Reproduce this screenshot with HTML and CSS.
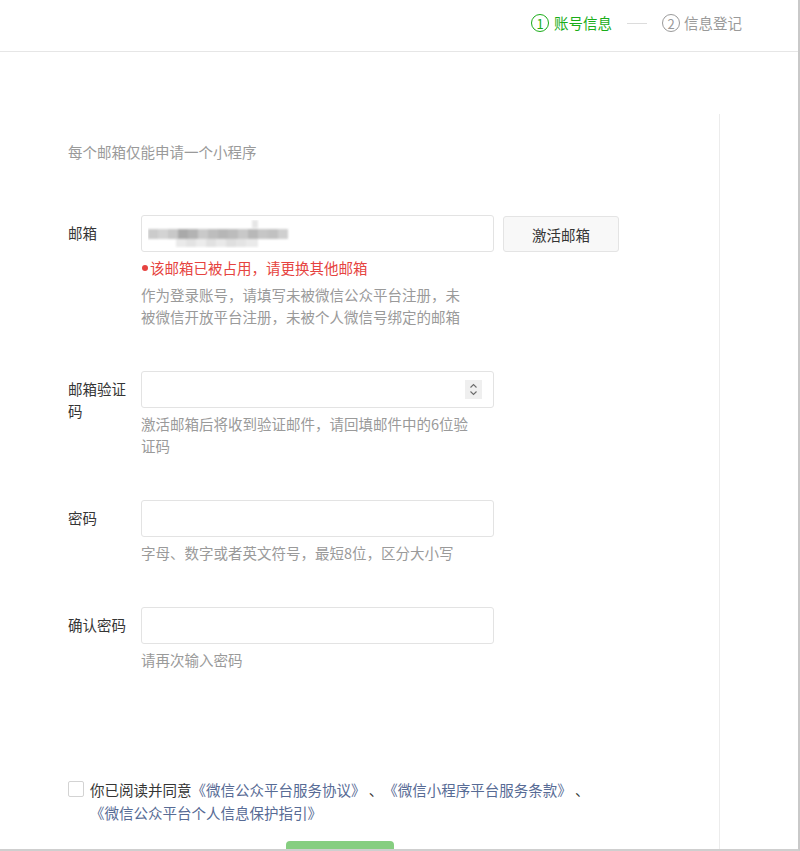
FILE: index.html
```html
<!DOCTYPE html>
<html lang="zh-CN">
<head>
<meta charset="utf-8">
<title>小程序注册</title>
<link rel="stylesheet" href="styles.css">
</head>
<body>
<div class="window">
  <header class="header">
    <div class="step active"><span class="num">1</span><span class="step-text">账号信息</span></div>
    <span class="dash"></span>
    <div class="step"><span class="num">2</span><span class="step-text">信息登记</span></div>
  </header>
  <main class="main">
    <p class="intro">每个邮箱仅能申请一个小程序</p>
    <div class="form">
      <div class="row">
        <div class="label">邮箱</div>
        <div class="field">
          <div class="line">
            <div class="input input-email">
              <svg class="mosaic" width="145" height="28" viewBox="0 0 145 28">
                <defs><filter id="b"><feGaussianBlur stdDeviation="0.8"/></filter></defs>
                <g filter="url(#b)">
                  <rect x="104" y="0" width="6" height="8" fill="#e6e6e6"/>
                  <rect x="0" y="9" width="10" height="10" fill="#cbcbcb"/>
                  <rect x="10" y="9" width="10" height="10" fill="#d3d3d3"/>
                  <rect x="20" y="9" width="10" height="10" fill="#c8c8c8"/>
                  <rect x="30" y="9" width="10" height="10" fill="#a9a9a9"/>
                  <rect x="40" y="9" width="10" height="10" fill="#b3b3b3"/>
                  <rect x="50" y="9" width="10" height="10" fill="#c9c9c9"/>
                  <rect x="60" y="9" width="10" height="10" fill="#bdbdbd"/>
                  <rect x="70" y="9" width="10" height="10" fill="#b6b6b6"/>
                  <rect x="80" y="9" width="10" height="10" fill="#bcbcbc"/>
                  <rect x="90" y="9" width="10" height="10" fill="#c8c8c8"/>
                  <rect x="100" y="9" width="10" height="10" fill="#b8b8b8"/>
                  <rect x="110" y="9" width="10" height="10" fill="#c6c6c6"/>
                  <rect x="120" y="9" width="10" height="10" fill="#c1c1c1"/>
                  <rect x="130" y="9" width="10" height="10" fill="#cfcfcf"/>
                  <rect x="28" y="19" width="10" height="8" fill="#eaeaea"/>
                  <rect x="38" y="19" width="10" height="8" fill="#e3e3e3"/>
                  <rect x="48" y="19" width="10" height="8" fill="#ececec"/>
                  <rect x="58" y="19" width="10" height="8" fill="#e1e1e1"/>
                  <rect x="68" y="19" width="10" height="8" fill="#e9e9e9"/>
                  <rect x="78" y="19" width="10" height="8" fill="#dfdfdf"/>
                  <rect x="88" y="19" width="10" height="8" fill="#e4e4e4"/>
                  <rect x="98" y="19" width="12" height="8" fill="#eaeaea"/>
                </g>
              </svg>
            </div>
            <div class="btn">激活邮箱</div>
          </div>
          <p class="error"><span class="dot"></span>该邮箱已被占用，请更换其他邮箱</p>
          <p class="tip">作为登录账号，请填写未被微信公众平台注册，未被微信开放平台注册，未被个人微信号绑定的邮箱</p>
        </div>
      </div>
      <div class="row">
        <div class="label">邮箱验证码</div>
        <div class="field">
          <div class="input input-code">
            <span class="spinner">
              <svg width="17" height="19" viewBox="0 0 17 19">
                <path d="M5.5 7.5 L8.5 4.5 L11.5 7.5" fill="none" stroke="#6b6b6b" stroke-width="1.1"/>
                <path d="M5.5 11.5 L8.5 14.5 L11.5 11.5" fill="none" stroke="#6b6b6b" stroke-width="1.1"/>
              </svg>
            </span>
          </div>
          <p class="tip">激活邮箱后将收到验证邮件，请回填邮件中的6位验证码</p>
        </div>
      </div>
      <div class="row">
        <div class="label">密码</div>
        <div class="field">
          <div class="input"></div>
          <p class="tip">字母、数字或者英文符号，最短8位，区分大小写</p>
        </div>
      </div>
      <div class="row">
        <div class="label">确认密码</div>
        <div class="field">
          <div class="input"></div>
          <p class="tip">请再次输入密码</p>
        </div>
      </div>
    </div>
    <div class="agree">
      <span class="checkbox"></span>
      <p class="agree-text">你已阅读并同意<a class="link">《微信公众平台服务协议》</a> 、<a class="link">《微信小程序平台服务条款》</a> 、<a class="link">《微信公众平台个人信息保护指引》</a></p>
    </div>
    <div class="submit">注册</div>
  </main>
</div>
</body>
</html>
```

FILE: styles.css
```css
* {
  box-sizing: border-box;
  margin: 0;
  padding: 0;
}

html, body {
  background: #fff;
}

body {
  font-family: "Noto Sans CJK SC", "Noto Sans", sans-serif;
  font-size: 14.5px;
  color: #353535;
  text-spacing-trim: space-all;
}

.window {
  width: 800px;
  height: 851px;
  overflow: hidden;
  border-right: 2px solid #c9c9c9;
  border-bottom: 2px solid #cfcfcf;
}

.header {
  height: 52px;
  padding: 0 56px 5px 0;
  border-bottom: 1px solid #e6e6e6;
  display: flex;
  align-items: center;
  justify-content: flex-end;
}

.step {
  display: flex;
  align-items: center;
  color: #9a9a9a;
  line-height: 20px;
}

.step .num {
  width: 18px;
  height: 18px;
  border: 1.5px solid #9a9a9a;
  border-radius: 50%;
  display: flex;
  align-items: center;
  justify-content: center;
  font-size: 13px;
  line-height: 1;
  margin-right: 4px;
}

.step.active {
  color: #1aad19;
}

.step.active .num {
  border-color: #1aad19;
  margin-right: 5px;
}

.dash {
  width: 20px;
  height: 1px;
  background: #dcdcdc;
  margin: 0 15px;
}

.main {
  width: 720px;
  height: 800px;
  margin-top: 62px;
  border-right: 1px solid #ececec;
  padding: 28px 0 0 68px;
}

.intro {
  line-height: 20px;
  color: #9a9a9a;
}

.form {
  margin-top: 53px;
}

.row {
  display: flex;
}

.row + .row {
  margin-top: 43px;
}

.label {
  width: 60px;
  margin-right: 13px;
  padding-top: 7px;
  line-height: 22px;
  flex: none;
}

.field {
  flex: none;
}

.line {
  display: flex;
  gap: 9px;
}

.input {
  width: 353px;
  height: 37px;
  border: 1px solid #e3e3e3;
  border-radius: 3px;
  display: flex;
  align-items: center;
}

.input-email {
  padding-left: 6px;
}

.mosaic {
  display: block;
}

.input-code {
  justify-content: flex-end;
  padding-right: 11px;
}

.spinner {
  width: 17px;
  height: 19px;
  background: #efefef;
  display: block;
}

.spinner svg {
  display: block;
}

.btn {
  width: 116px;
  height: 36px;
  margin-top: 1px;
  border: 1px solid #e4e4e4;
  border-radius: 3px;
  background: #f8f8f8;
  display: flex;
  align-items: center;
  justify-content: center;
  color: #353535;
}

.error {
  margin-top: 5px;
  line-height: 22px;
  color: #e64340;
  display: flex;
  align-items: center;
}

.dot {
  width: 6px;
  height: 6px;
  border-radius: 50%;
  background: #e64340;
  margin: 0 2px 0 1px;
}

.tip {
  width: 330px;
  margin-top: 5px;
  line-height: 22px;
  color: #9a9a9a;
}

.agree {
  display: flex;
  align-items: flex-start;
  margin-top: 107px;
}

.checkbox {
  flex: none;
  width: 16px;
  height: 16px;
  margin: 3px 6px 0 0;
  border: 1px solid #d3d3d3;
  border-radius: 2px;
  background: #fff;
}

.agree-text {
  width: 520px;
  line-height: 23px;
}

.link {
  color: #576b95;
  white-space: nowrap;
}

.submit {
  width: 108px;
  height: 36px;
  margin: 17px 0 0 218px;
  border-radius: 4px;
  background: #86ce80;
  color: #fff;
  display: flex;
  align-items: center;
  justify-content: center;
}
```
